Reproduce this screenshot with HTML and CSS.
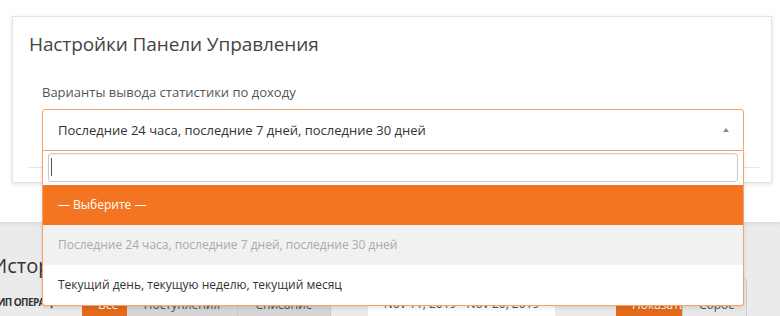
FILE: index.html
```html
<!DOCTYPE html>
<html lang="ru">
<head>
  <meta charset="UTF-8">
  <title>Настройки Панели Управления</title>
  <link rel="stylesheet" href="styles.css">
</head>
<body>
  <div class="top">
    <div class="card">
      <h2 class="card-title">Настройки Панели Управления</h2>
      <div class="card-body">
        <label class="field-label">Варианты вывода статистики по доходу</label>
        <div class="select-wrap">
          <div class="select">
            <span>Последние 24 часа, последние 7 дней, последние 30 дней</span>
            <span class="arrow"></span>
          </div>
          <div class="dropdown">
            <div class="search"><span class="caret"></span></div>
            <ul class="options">
              <li class="option active">— Выберите —</li>
              <li class="option selected">Последние 24 часа, последние 7 дней, последние 30 дней</li>
              <li class="option">Текущий день, текущую неделю, текущий месяц</li>
            </ul>
          </div>
        </div>
      </div>
      <div class="card-foot"></div>
    </div>
  </div>

  <div class="bottom">
    <h3 class="history-title">История операций</h3>
    <div class="toolbar">
      <span class="toolbar-label">Тип операции</span>
      <div class="btn-group">
        <button class="btn btn-orange">Все</button>
        <button class="btn btn-grey">Поступления</button>
        <button class="btn btn-grey">Списание</button>
      </div>
      <div class="date">Nov 11, 2019 - Nov 20, 2019</div>
      <button class="btn btn-orange btn-show">Показать</button>
      <button class="btn btn-outline">Сброс</button>
    </div>
  </div>
</body>
</html>
```

FILE: styles.css
```css
body, html {
  margin: 0;
  padding: 0;
  font-family: "Open Sans", Arial, sans-serif;
}

body {
  background-color: #ebebeb;
  width: 780px;
  height: 316px;
  overflow: hidden;
}

.top {
  position: relative;
  z-index: 2;
  height: 222px;
  box-sizing: border-box;
  padding: 16px 0 0 12px;
  background: #fff;
  box-shadow: 0 2px 4px rgba(0, 0, 0, 0.08);
}

.card {
  width: 760px;
  height: 167px;
  box-sizing: border-box;
  border: 1px solid #e3e3e3;
  background: #fff;
  box-shadow: 0 1px 4px rgba(0, 0, 0, 0.12);
}

.card-title {
  margin: 0;
  padding: 15px 16px 0;
  font-size: 19px;
  font-weight: normal;
  line-height: 24px;
  color: #444;
  letter-spacing: -0.1px;
}

.card-body {
  padding: 28px 27px 0 29px;
}

.field-label {
  display: block;
  font-size: 13px;
  line-height: 17px;
  color: #555;
  margin-bottom: 8px;
}

.select-wrap {
  position: relative;
}

.select {
  display: flex;
  align-items: center;
  justify-content: space-between;
  height: 42px;
  box-sizing: border-box;
  padding: 0 14px 0 15px;
  border: 1px solid #f7a266;
  border-radius: 3px 3px 0 0;
  font-size: 13px;
  color: #333;
}

.arrow {
  width: 0;
  height: 0;
  border-left: 3px solid transparent;
  border-right: 3px solid transparent;
  border-bottom: 4px solid #888;
}

.card-foot {
  margin: 16px 12px 0 16px;
  border-top: 1px solid #e5e5e5;
}

.dropdown {
  position: absolute;
  top: 100%;
  left: 0;
  right: 0;
  background: #fff;
  border: 1px solid #f7a266;
  border-top: none;
  border-radius: 0 0 3px 3px;
  box-shadow: 0 2px 4px rgba(0, 0, 0, 0.1);
}

.search {
  margin: 2px 5px 3px;
  height: 29px;
  box-sizing: border-box;
  padding: 4px 2px;
  border: 1px solid #ccc;
  border-radius: 3px;
  box-shadow: inset 0 1px 2px rgba(0, 0, 0, 0.08);
}

.caret {
  display: block;
  width: 1px;
  height: 18px;
  background: #555;
}

.options {
  list-style: none;
  margin: 0;
  padding: 0;
}

.option {
  height: 40px;
  line-height: 40px;
  padding: 0 15px;
  font-size: 12px;
  color: #333;
}

.option.active {
  background: #f37521;
  color: #fff;
}

.option.selected {
  background: #f1f1f1;
  color: #aaa;
}

.bottom {
  margin-left: -5px;
}

.history-title {
  margin: 0 0 0 -3px;
  padding-top: 29px;
  font-size: 20px;
  font-weight: normal;
  line-height: 30px;
  color: #333;
}

.toolbar {
  display: flex;
  align-items: flex-start;
  margin-top: -2px;
  height: 50px;
}

.toolbar-label {
  width: 74px;
  margin-left: -3px;
  margin-top: 16px;
  font-size: 10px;
  font-weight: bold;
  text-transform: uppercase;
  letter-spacing: -0.6px;
  color: #333;
  white-space: nowrap;
  overflow: hidden;
}

.btn-group {
  display: flex;
  margin-left: 16px;
}

.btn {
  height: 50px;
  border: none;
  font-family: "Open Sans", Arial, sans-serif;
  font-size: 12px;
  padding: 0 16px;
}

.btn-orange {
  background: #e46a1c;
  color: #fff;
  width: 45px;
}

.btn-grey {
  background: #d6d6d6;
  color: #555;
  border-right: 1px solid #c8c8c8;
}

.btn-grey:nth-child(2) {
  width: 111px;
}

.btn-grey:nth-child(3) {
  width: 93px;
}

.date {
  margin-left: 37px;
  width: 187px;
  height: 50px;
  line-height: 50px;
  background: #fff;
  font-size: 12px;
  color: #555;
  text-align: center;
}

.btn-show {
  margin-left: 61px;
  width: 66px;
}

.btn-outline {
  width: 65px;
  background: #e8e8e8;
  border: 1px solid #ccc;
  border-radius: 3px;
  color: #555;
}
```
